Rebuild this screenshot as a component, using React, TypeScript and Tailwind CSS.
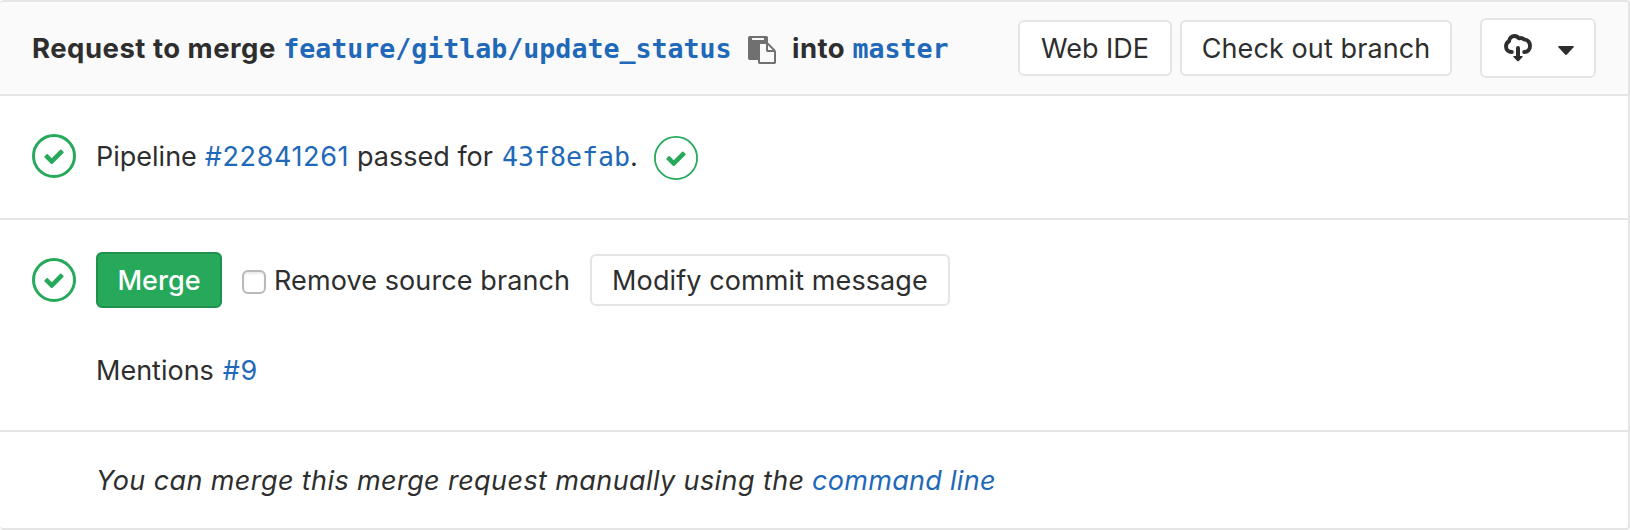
import type { ReactNode } from 'react';

function StatusIcon({ thin = false, className = '' }: { thin?: boolean; className?: string }) {
  return (
    <svg className={`h-11 w-11 shrink-0 ${className}`} viewBox="0 0 44 44" fill="none">
      <circle cx="22" cy="22" r={thin ? 21.1 : 20.5} stroke="#26a95a" strokeWidth={thin ? 1.8 : 3} />
      <path
        transform="scale(3.142857)"
        fill="#26a95a"
        d="M6.278 7.697L5.045 6.464a.296.296 0 0 0-.42-.002l-.613.614a.298.298 0 0 0 .002.42l1.91 1.909a.5.5 0 0 0 .703.005l.265-.265L9.997 6.04a.291.291 0 0 0-.009-.408l-.614-.614a.29.29 0 0 0-.408-.009L6.278 7.697z"
      />
    </svg>
  );
}

function PasteIcon() {
  return (
    <svg className="h-7 w-7 shrink-0" viewBox="0 0 1792 1792" fill="#707070">
      <path d="M768 1664h896v-640h-416q-40 0-68-28t-28-68v-416h-384v1152zM1024 224v-64q0-13-9.5-22.5t-22.5-9.5h-704q-13 0-22.5 9.5t-9.5 22.5v64q0 13 9.5 22.5t22.5 9.5h704q13 0 22.5-9.5t9.5-22.5zM1280 896h299l-299-299v299zM1792 1024v672q0 40-28 68t-68 28h-960q-40 0-68-28t-28-68v-160h-544q-40 0-68-28t-28-68v-1344q0-40 28-68t68-28h1088q40 0 68 28t28 68v328q21 13 36 28l408 408q28 28 48 76t20 88z" />
    </svg>
  );
}

function DownloadIcon() {
  return (
    <svg className="h-7 w-7 shrink-0" viewBox="0 0 28 28" fill="none">
      <path
        d="M7.8 18C4.6 18 2 15.8 2 12.5C2 10 3.2 8.3 5 7.3C5.3 4 7.7 2 10.5 2C12.3 2 13.8 2.8 14.9 4.3C16.8 3.7 18.800 4.200 20.200 5.400C23.800 6 26 8.700 26 12C26 15.500 23.700 18 20.200 18"
        stroke="#2e2e2e"
        strokeWidth="3.900"
        strokeLinecap="round"
        strokeLinejoin="round"
      />
      <path
        d="M12 14a2 2 0 0 1 4 0v8h2.200q1 .4.4 1.100L14.800 27q-.8.700-1.600 0L9.400 23.100q-.6-.7.400-1.100H12z"
        fill="#2e2e2e"
      />
    </svg>
  );
}

function Caret() {
  return (
    <svg className="h-[9px] w-4 shrink-0" viewBox="0 0 16 9" fill="#2e2e2e">
      <path d="M1 0h14q1.300.2.6 1.300L8.900 8.500q-.9.800-1.800 0L.4 1.300Q-.3.200 1 0z" />
    </svg>
  );
}

function Button({ className, children }: { className: string; children: ReactNode }) {
  return (
    <button
      type="button"
      className={`flex shrink-0 items-center justify-center rounded-[6px] border-2 ${className}`}
    >
      <span className="pt-px">{children}</span>
    </button>
  );
}

export default function App() {
  return (
    <div className="flex h-[530px] w-[1630px] flex-col overflow-hidden rounded-[4px] border-y-2 border-r-2 border-[#e5e5e5] bg-white font-[Inter,sans-serif] text-[27px] leading-[39px] whitespace-nowrap text-[#2e2e2e]">
      <header className="flex h-[94px] shrink-0 items-center border-b-2 border-[#e5e5e5] bg-[#fafafa] px-8">
        <div className="flex items-baseline pt-px font-bold">
          <span className="w-[251.2px] text-[27.5px] tracking-[0.5px]">Request to merge</span>
          <a className="w-[464.8px] font-['DejaVu_Sans_Mono',monospace] text-[26.6px] text-[#1f69b8]">
            feature/gitlab/update_status
          </a>
          <div className="mt-[7px] self-start">
            <PasteIcon />
          </div>
          <span className="ml-4 w-[60.5px] text-[27.5px] tracking-[0.5px]">into</span>
          <a className="font-['DejaVu_Sans_Mono',monospace] text-[26.6px] text-[#1f69b8]">master</a>
        </div>
        <div className="ml-auto flex items-center">
          <Button className="h-14 w-[154px] border-[#e5e5e5] bg-white">Web IDE</Button>
          <Button className="ml-2 h-14 w-[272px] border-[#e5e5e5] bg-white tracking-[0.1px]">Check out branch</Button>
          <div className="ml-7 flex h-[60px] w-[116px] items-center rounded-[6px] border-2 border-[#e5e5e5] bg-white pl-[22px]">
            <DownloadIcon />
            <div className="ml-[26px] pt-[5px]">
              <Caret />
            </div>
          </div>
        </div>
      </header>

      <section className="flex h-[124px] shrink-0 items-center border-b-2 border-[#e5e5e5] pb-0.5 pl-8">
        <StatusIcon />
        <div className="ml-5 flex w-[542px] items-baseline pt-px">
          <span>Pipeline</span>
          <a className="ml-2 tracking-[0.6px] text-[#1f69b8]">#22841261</a>
          <span className="ml-2">passed for</span>
          <a className="ml-[9px] font-['DejaVu_Sans_Mono',monospace] text-[26.6px] text-[#1f69b8]">43f8efab</a>
          <span>.</span>
        </div>
        <StatusIcon thin className="ml-4 mt-1" />
      </section>

      <section className="h-[212px] shrink-0 border-b-2 border-[#e5e5e5] pt-8 pl-8">
        <div className="flex items-center">
          <StatusIcon />
          <Button className="ml-5 h-14 w-[126px] border-[#1f914c] bg-[#26a95a] font-medium text-white">Merge</Button>
          <label className="ml-5 flex w-[348px] items-center">
            <input
              type="checkbox"
              className="mt-1 h-6 w-6 appearance-none rounded-[6px] border-2 border-[#b9b9b9] bg-white shadow-[inset_0_2px_2px_#ececec]"
            />
            <span className="ml-2 pt-px tracking-[0.1px]">Remove source branch</span>
          </label>
          <Button className="h-[52px] w-[360px] border-[#e5e5e5] bg-white tracking-[0.1px]">Modify commit message</Button>
        </div>
        <div className="mt-[43px] flex pl-16">
          <span>Mentions</span>
          <a className="ml-[9px] tracking-[0.6px] text-[#1f69b8]">#9</a>
        </div>
      </section>

      <footer className="flex flex-1 items-center pl-24 tracking-[0.4px] italic">
        <span className="w-[716px]">You can merge this merge request manually using the</span>
        <a className="tracking-[0.3px] text-[#1f69b8]">command line</a>
      </footer>
    </div>
  );
}
